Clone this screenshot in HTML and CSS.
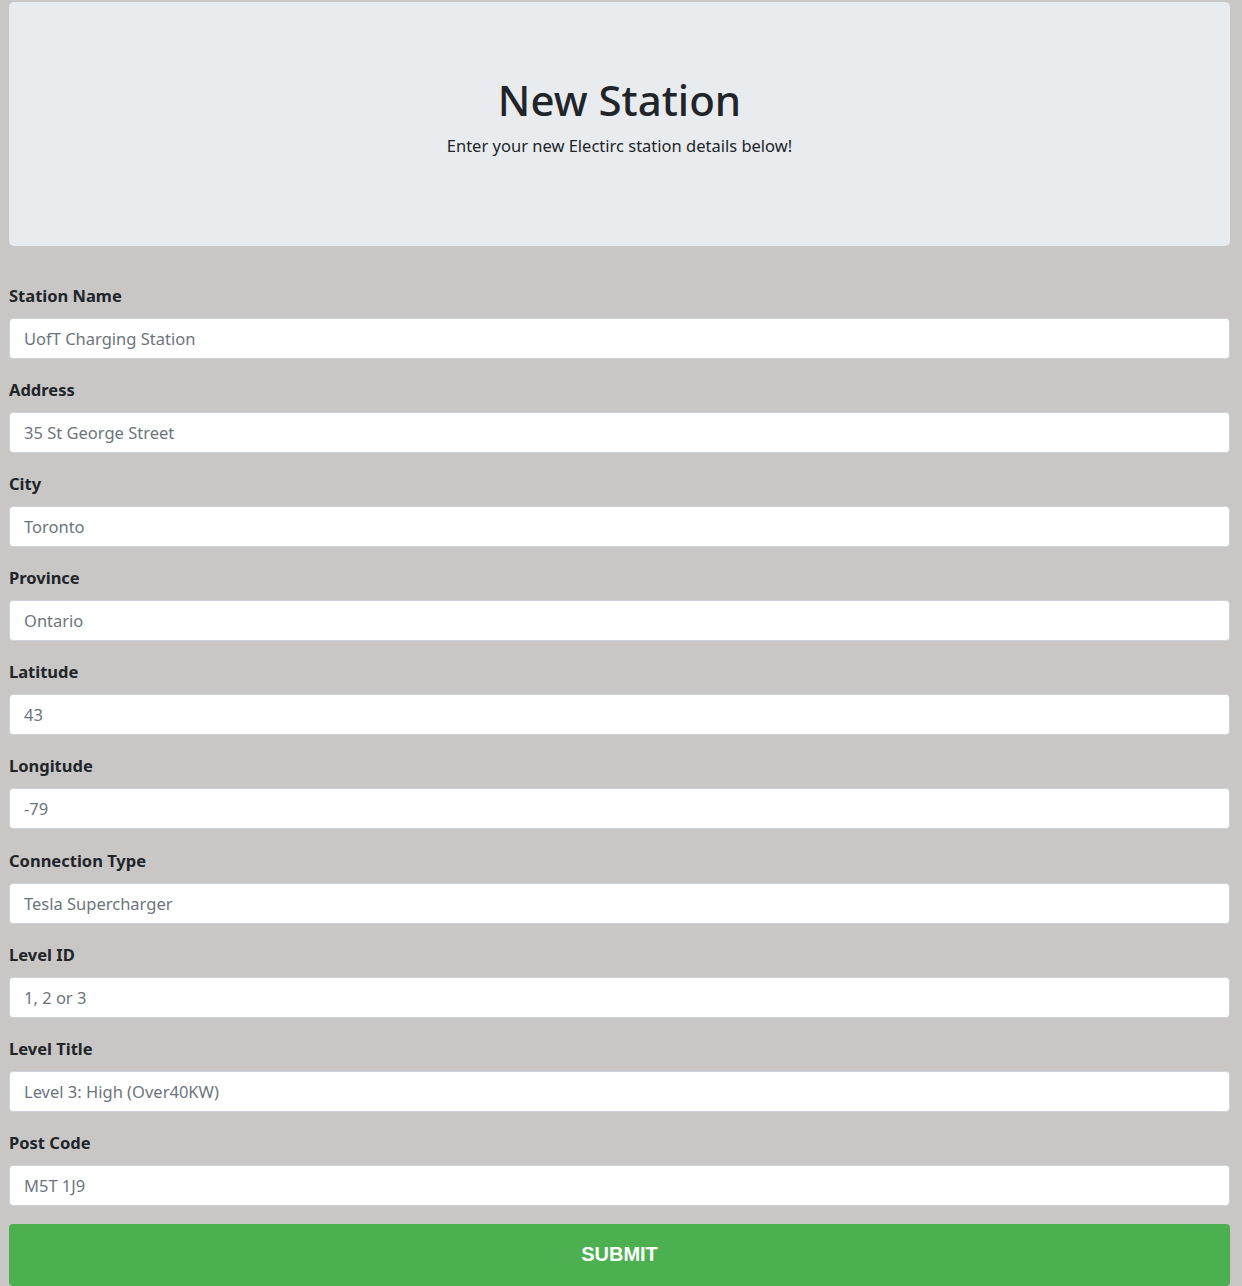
FILE: index.html
```html
<!DOCTYPE html>
<html lang="en">
<head>
<meta charset="utf-8">
<title>New Station</title>
<link rel="stylesheet" href="styles.css">
</head>
<body>
<div class="page">
  <header class="jumbotron">
    <h1 class="title">New Station</h1>
    <p class="lead">Enter your new Electirc station details below!</p>
  </header>
  <form class="form">
    <div class="group"><label class="label">Station Name</label><input class="input" placeholder="UofT Charging Station"></div>
    <div class="group"><label class="label">Address</label><input class="input" placeholder="35 St George Street"></div>
    <div class="group"><label class="label">City</label><input class="input" placeholder="Toronto"></div>
    <div class="group"><label class="label">Province</label><input class="input" placeholder="Ontario"></div>
    <div class="group"><label class="label">Latitude</label><input class="input" placeholder="43"></div>
    <div class="group"><label class="label">Longitude</label><input class="input" placeholder="-79"></div>
    <div class="group"><label class="label">Connection Type</label><input class="input" placeholder="Tesla Supercharger"></div>
    <div class="group"><label class="label">Level ID</label><input class="input" placeholder="1, 2 or 3"></div>
    <div class="group"><label class="label">Level Title</label><input class="input" placeholder="Level 3: High (Over40KW)"></div>
    <div class="group"><label class="label">Post Code</label><input class="input" placeholder="M5T 1J9"></div>
    <button type="button" class="submit">SUBMIT</button>
  </form>
</div>
</body>
</html>
```
FILE: styles.css
```css
html, body {
  margin: 0;
  padding: 0;
  background: #c8c7c5;
}
body {
  font-family: "Noto Sans", "Open Sans", sans-serif;
  color: #212529;
}
.page {
  padding: 2px 12px 0 9px;
}
.jumbotron {
  background: #e9ecef;
  border-radius: 5px;
  height: 244px;
  box-sizing: border-box;
  padding-top: 70px;
  text-align: center;
}
.title {
  margin: 0;
  font-size: 42px;
  font-weight: 500;
  line-height: 55px;
}
.lead {
  margin: 5px 0 0;
  font-size: 16.5px;
  line-height: 27px;
}
.form {
  display: flex;
  flex-direction: column;
  gap: 17.1px;
  margin-top: 36px;
}
.group {
  display: flex;
  flex-direction: column;
  gap: 9px;
}
.label {
  font-size: 16.5px;
  font-weight: 700;
  line-height: 27px;
}
.input {
  height: 41px;
  box-sizing: border-box;
  border: 1px solid #ced4da;
  border-radius: 4px;
  background: #fff;
  padding: 0 14px;
  font-family: inherit;
  font-size: 16.5px;
  color: #495057;
  outline: none;
}
.input::placeholder {
  color: #6c757d;
  opacity: 1;
}
.submit {
  margin-top: 1px;
  height: 62px;
  border: none;
  border-radius: 4px;
  background: #4caf50;
  color: #fff;
  font-family: "Liberation Sans", Arial, sans-serif;
  font-weight: 700;
  font-size: 20px;
}
```
